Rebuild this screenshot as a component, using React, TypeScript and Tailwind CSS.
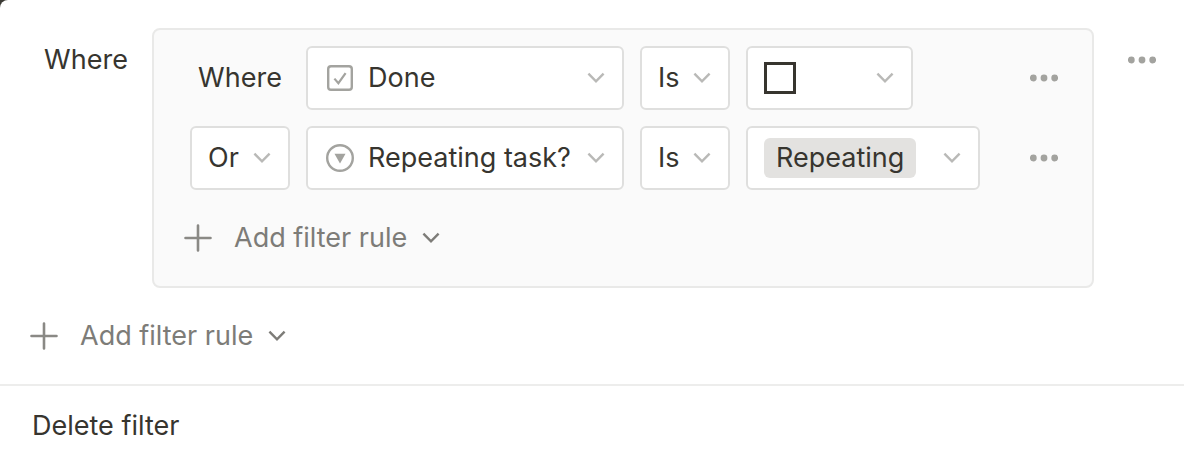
import React from 'react';

const Chevron = ({ className = 'text-[#b9b9b7]' }: { className?: string }) => (
  <svg viewBox="0 0 18 12" className={`w-[18px] h-3 shrink-0 pointer-events-none ${className}`} fill="none" stroke="currentColor" strokeWidth="2.4" aria-hidden="true">
    <path d="M1.4 1.6 9 9.4l7.6-7.8" />
  </svg>
);

const CheckboxIcon = () => (
  <svg viewBox="0 0 28 28" className="w-7 h-7 shrink-0 text-[#a3a39f]" fill="none" stroke="currentColor" aria-hidden="true">
    <rect x="2.2" y="2.2" width="23.6" height="23.6" rx="2.8" strokeWidth="2.4" />
    <path d="m8.4 14.6 4 4.6 7.2-10" strokeWidth="2.2" />
  </svg>
);

const SelectIcon = () => (
  <svg viewBox="0 0 28 28" className="w-7 h-7 shrink-0 text-[#a3a39f]" fill="none" aria-hidden="true">
    <circle cx="14" cy="14" r="12.8" stroke="currentColor" strokeWidth="2.4" />
    <path d="M8.5 9.8h11L14 19.6z" fill="currentColor" />
  </svg>
);

const MoreButton = ({ label }: { label: string }) => (
  <button type="button" aria-label={label} className="w-7 h-16 shrink-0 flex items-center justify-center text-[#a3a39f]">
    <svg viewBox="0 0 28 8" className="w-7 h-2" fill="currentColor" aria-hidden="true">
      <circle cx="3.3" cy="4" r="3.4" />
      <circle cx="14" cy="4" r="3.4" />
      <circle cx="24.7" cy="4" r="3.4" />
    </svg>
  </button>
);

const AddRuleButton = () => (
  <button type="button" className="h-16 flex items-center text-[#7d7c78]">
    <svg viewBox="0 0 28 28" className="w-7 h-7 mr-[22px] text-[#8a8985]" stroke="currentColor" strokeWidth="2.6" strokeLinecap="round" aria-hidden="true">
      <path d="M14 1.5v25M1.5 14h25" />
    </svg>
    <span className="mr-[15px]">Add filter rule</span>
    <Chevron className="text-[#7d7c78]" />
  </button>
);

type FieldProps = {
  label: string;
  value: string;
  options: string[];
  className: string;
  icon?: React.ReactNode;
  tag?: boolean;
};

const Field = ({ label, value, options, className, icon, tag }: FieldProps) => (
  <label className={`h-16 shrink-0 flex items-center bg-white border-2 border-[#dfdfde] rounded-md pl-4 pr-[17px] ${className}`}>
    {icon && <span className="ml-0.5 mr-3.5">{icon}</span>}
    <select
      aria-label={label}
      defaultValue={value}
      className={`appearance-none field-sizing-content outline-none ${tag ? 'h-10 rounded-md bg-[#e3e2e0] px-3' : 'bg-transparent'}`}
    >
      {options.map(option => (
        <option key={option}>{option}</option>
      ))}
    </select>
    <span className="ml-auto"><Chevron /></span>
  </label>
);

const properties = ['Done', 'Repeating task?'];
const operators = ['Is', 'Is not'];

export default function App() {
  return (
    <div className="bg-[#3b3a35]">
      <main className="bg-white rounded-tl-lg text-[27px] leading-10 text-[#37352f] font-['Inter','Liberation_Sans',sans-serif]">
        <div className="flex items-start pt-7 pl-9 pr-7">
          <div className="w-25 h-16 mr-4 shrink-0 flex items-center justify-center">Where</div>

          <section aria-label="Filter group" className="flex-1 min-w-0 mr-[34px] border-2 border-[#e9e9e8] rounded-lg bg-[#fafafa] py-4 pl-[30px] pr-[34px]">
            <div className="flex flex-col gap-4">
              <div className="flex gap-4 pl-1.5">
                <div className="w-25 h-16 shrink-0 flex items-center justify-center">Where</div>
                <Field label="Property" value="Done" options={properties} icon={<CheckboxIcon />} className="w-[318px]" />
                <Field label="Condition" value="Is" options={operators} className="w-[90px]" />
                <div className="w-[167px] h-16 shrink-0 flex items-center justify-between bg-white border-2 border-[#dfdfde] rounded-md pl-4 pr-[17px]">
                  <input type="checkbox" aria-label="Done value" className="appearance-none w-8 h-8 border-3 border-[#37352f]" />
                  <Chevron />
                </div>
                <div className="ml-auto"><MoreButton label="Rule options" /></div>
              </div>

              <div className="flex gap-4 pl-1.5">
                <Field label="Conjunction" value="Or" options={['And', 'Or']} className="w-25" />
                <Field label="Property" value="Repeating task?" options={properties} icon={<SelectIcon />} className="w-[318px]" />
                <Field label="Condition" value="Is" options={operators} className="w-[90px]" />
                <Field label="Value" value="Repeating" options={['Repeating', 'One-off']} tag className="w-[234px]" />
                <div className="ml-auto"><MoreButton label="Rule options" /></div>
              </div>

              <AddRuleButton />
            </div>
          </section>

          <MoreButton label="Group options" />
        </div>

        <div className="py-4 pl-[30px]">
          <AddRuleButton />
        </div>

        <div className="border-t-2 border-[#ededec] pt-5 pb-2 pl-8">
          <button type="button">Delete filter</button>
        </div>
      </main>
    </div>
  );
}
